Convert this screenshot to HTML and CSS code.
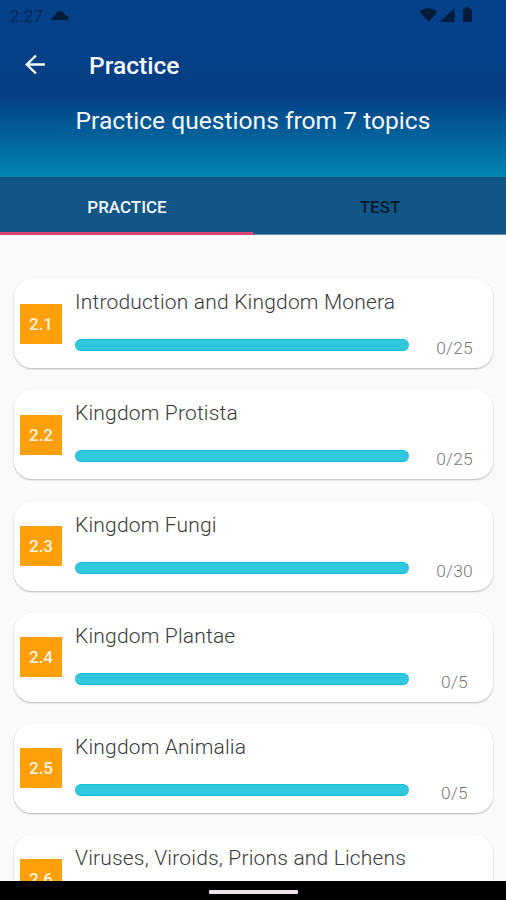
FILE: index.html
```html
<!DOCTYPE html>
<html lang="en">
<head>
<meta charset="utf-8">
<title>Practice</title>
<link rel="stylesheet" href="styles.css">
</head>
<body>
<div class="screen">
  <header class="header">
    <div class="status">
      <span class="time">2:27</span>
      <svg class="cloud" width="18" height="11" viewBox="0 0 18 11"><path d="M0.500 10C0 8 1.500 6.500 3.500 6C4.500 2 8 0 11 1.500C12.500 2 13 3.500 14 5C17 5 18 8 17 10Z"/></svg>
      <svg class="signals" width="56" height="18" viewBox="0 0 56 18"><path d="M0.500 4.500Q9.500-2 18.500 4.500L9.500 15ZM21 15L35.500 1V15ZM44 3Q44 2 45 2H46V0.500H50.500V2H51.500Q53 2 53 3V14Q53 15 52 15H45Q44 15 44 14Z"/></svg>
    </div>
    <div class="appbar">
      <svg class="back" width="22" height="22" viewBox="0 0 22 22"><path d="M21 10.500H2.800M12 1.500L2.800 10.500L12 19.500"/></svg>
      <h1 class="title">Practice</h1>
    </div>
    <p class="subtitle">Practice questions from 7 topics</p>
  </header>
  <nav class="tabs">
    <div class="tab active"><span>PRACTICE</span></div>
    <div class="tab"><span>TEST</span></div>
  </nav>
  <main class="list">
    <article class="card"><div class="badge">2.1</div><div class="body"><h2>Introduction and Kingdom Monera</h2><div class="row"><div class="bar"></div><span class="count">0/25</span></div></div></article>
    <article class="card"><div class="badge">2.2</div><div class="body"><h2>Kingdom Protista</h2><div class="row"><div class="bar"></div><span class="count">0/25</span></div></div></article>
    <article class="card"><div class="badge">2.3</div><div class="body"><h2>Kingdom Fungi</h2><div class="row"><div class="bar"></div><span class="count">0/30</span></div></div></article>
    <article class="card"><div class="badge">2.4</div><div class="body"><h2>Kingdom Plantae</h2><div class="row"><div class="bar"></div><span class="count">0/5</span></div></div></article>
    <article class="card"><div class="badge">2.5</div><div class="body"><h2>Kingdom Animalia</h2><div class="row"><div class="bar"></div><span class="count">0/5</span></div></div></article>
    <article class="card"><div class="badge">2.6</div><div class="body"><h2>Viruses, Viroids, Prions and Lichens</h2></div></article>
  </main>
  <footer class="navbar"><div class="handle"></div></footer>
</div>
</body>
</html>
```
FILE: styles.css
```css
* { box-sizing: border-box; }
body { margin: 0; font-family: Roboto, "Liberation Sans", sans-serif; }
h1, h2, p { margin: 0; }
.screen { width: 506px; height: 900px; display: flex; flex-direction: column; overflow: hidden; background: #fafafa; }
.header { height: 177px; flex: none; background: linear-gradient(#04418a 0, #043f85 96px, #0085b2 177px); color: #f5f8ff; }
.status { height: 32px; display: flex; align-items: center; padding: 0 31.5px 0 10px; color: #03264f; fill: #021b38; }
.time { font-size: 17px; line-height: 32px; width: 41px; letter-spacing: 0.1px; }
.signals { margin-left: auto; }
.cloud { margin-bottom: 1px; }
.appbar { height: 66px; display: flex; align-items: center; padding-left: 24px; }
.back { fill: none; stroke: #f5f8ff; stroke-width: 2.4; }
.title { margin-left: 43px; padding-top: 2px; font-size: 24.6px; line-height: 28px; font-weight: 500; }
.subtitle { margin-top: 9px; text-align: center; font-size: 24.6px; line-height: 28px; }
.tabs { height: 58px; flex: none; display: flex; background: #125688; border-bottom: 1px solid #688eae; }
.tab { flex: 1; height: 58px; display: flex; align-items: center; justify-content: center; font-size: 17px; font-weight: 500; color: #051a2b; padding: 2px 0 0 1px; }
.tab.active { color: #f2f6ff; border-bottom: 3px solid #db4470; padding-top: 5px; }
.list { flex: 1; min-height: 0; overflow: hidden; padding: 44.4px 13px 0 14px; }
.card { height: 89px; margin-bottom: 22.1px; display: flex; align-items: center; padding-left: 6px; background: #fff; border-radius: 18px; box-shadow: 0 1px 2px rgba(0, 0, 0, 0.28); }
.badge { width: 42px; height: 40px; flex: none; background: #ff9f0a; color: #fff4e0; font-size: 17px; line-height: 40px; font-weight: 500; text-align: center; }
.body { flex: 1; height: 89px; margin-left: 13px; padding-top: 9px; }
.body h2 { font-size: 21px; line-height: 28px; font-weight: 300; color: #3a3a3a; white-space: nowrap; letter-spacing: 0.18px; }
.row { display: flex; align-items: center; height: 30px; margin-top: 14px; }
.bar { width: 334px; height: 12px; border-radius: 6px; background: #30c8de; border-top: 1px solid #18bcd0; border-bottom: 1px solid #18bcd0; }
.count { flex: 1; padding: 6px 2px 0 9px; text-align: center; font-size: 17.4px; line-height: 20px; font-weight: 300; color: #777; letter-spacing: 0.2px; }
.navbar { height: 19px; flex: none; background: #000; display: flex; justify-content: center; padding-top: 9px; }
.handle { width: 89px; height: 4px; border-radius: 1px; background: #eee6ea; }
```
